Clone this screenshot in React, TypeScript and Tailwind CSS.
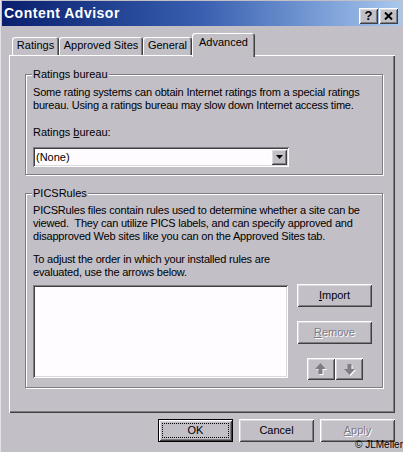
const raised =
    "shadow-[inset_1px_1px_0_#fff,inset_-1px_-1px_0_#404040,inset_2px_2px_0_#dcd8e0,inset_-2px_-2px_0_#807c84]";
const sunken =
    "shadow-[inset_1px_1px_0_#807c84,inset_-1px_-1px_0_#fff,inset_2px_2px_0_#404040,inset_-2px_-2px_0_#dcd8e0]";
const etched = "border border-[#807c84] shadow-[inset_1px_1px_0_#fff,1px_1px_0_#fff]";
const disabledText = "text-[#807c84] [text-shadow:1px_1px_0_#fff]";

function Button({
    children,
    disabled,
    className = "",
}: {
    children: React.ReactNode;
    disabled?: boolean;
    className?: string;
}) {
    return (
        <div
            className={`w-[75px] h-[23px] flex items-center justify-center ${raised} ${
                disabled ? disabledText : "text-black"
            } ${className}`}
        >
            {children}
        </div>
    );
}

function Tab({ label, width, active }: { label: string; width: string; active?: boolean }) {
    return (
        <div
            className={`${width} flex justify-center rounded-t-[3px] bg-[#c3bfc7] shadow-[inset_1px_1px_0_#fff,inset_-1px_0_0_#404040,inset_-2px_0_0_#807c84] ${
                active ? "h-[24px] -mb-[2px] pt-[3px] relative z-10" : "h-[18px] pt-[2px]"
            }`}
        >
            {label}
        </div>
    );
}

function ArrowIcon({ down }: { down?: boolean }) {
    const pts = "6.5,1 12,7 8.5,7 8.5,12 4.5,12 4.5,7 1,7";
    return (
        <svg width="14" height="14" viewBox="0 0 14 14" className={down ? "rotate-180" : ""}>
            <polygon points={pts} transform={down ? "translate(-1,-1)" : "translate(1,1)"} fill="#fff" />
            <polygon points={pts} fill="#807c84" />
        </svg>
    );
}

export default function App() {
    return (
        <div className="relative w-[403px] h-[452px] overflow-hidden bg-[#c3bfc7] text-[11px] leading-[13px] text-black font-['Liberation_Sans',Arial,sans-serif] shadow-[inset_1px_0_0_#e4e0e8]">
            {/* title bar */}
            <div className="mx-[2px] mt-[1px] h-[25px] flex items-center justify-between pl-[2px] pr-[3px] bg-gradient-to-r from-[#0a1f6e] via-[#3a5fb0] to-[#a8c8ee]">
                <span className="text-white font-bold text-[14px] tracking-[0.5px]">
                    Content Advisor
                </span>
                <div className="flex gap-[1px] mt-[4px]">
                    <div
                        className={`w-[19px] h-[16px] flex items-center justify-center bg-[#c3bfc7] font-bold text-[13px] leading-[13px] ${raised}`}
                    >
                        ?
                    </div>
                    <div
                        className={`w-[19px] h-[16px] flex items-center justify-center bg-[#c3bfc7] ${raised}`}
                    >
                        <svg width="9" height="8" viewBox="0 0 9 8">
                            <path d="M1 0.5 L8 7.5 M8 0.5 L1 7.5" stroke="#000" strokeWidth="2" />
                        </svg>
                    </div>
                </div>
            </div>

            {/* tabs */}
            <div className="ml-[9px] mt-[7px] w-[386px]">
                <div className="h-[22px] flex items-end pl-[3px]">
                    <Tab label="Ratings" width="w-[47px]" />
                    <Tab label="Approved Sites" width="w-[84px]" />
                    <Tab label="General" width="w-[49px]" />
                    <Tab label="Advanced" width="w-[63px]" active />
                </div>

                <div className="h-[358px] pt-[19px] pl-[16px] shadow-[inset_1px_1px_0_#fff,inset_-1px_-1px_0_#404040,inset_-2px_-2px_0_#807c84]">
                    {/* Ratings bureau group */}
                    <div className={`relative w-[358px] h-[101px] pt-[11px] pl-[7px] ${etched}`}>
                        <span className="absolute -top-[7px] left-[6px] px-[1px] bg-[#c3bfc7]">
                            Ratings bureau
                        </span>
                        <p className="whitespace-nowrap tracking-[-0.2px]">
                            Some rating systems can obtain Internet ratings from a special ratings
                            <br />
                            bureau. Using a ratings bureau may slow down Internet access time.
                        </p>
                        <p className="mt-[14px]">
                            Ratings <u>b</u>ureau:
                        </p>
                        <div
                            className={`mt-[8px] w-[256px] h-[20px] bg-[#fffcff] flex items-center justify-between pl-[3px] pr-[2px] ${sunken}`}
                        >
                            <span>(None)</span>
                            <div
                                className={`w-[16px] h-[16px] bg-[#c3bfc7] flex items-center justify-center ${raised}`}
                            >
                                <svg width="7" height="4" viewBox="0 0 7 4">
                                    <polygon points="0,0 7,0 3.5,4" fill="#000" />
                                </svg>
                            </div>
                        </div>
                    </div>

                    {/* PICSRules group */}
                    <div className={`relative mt-[18px] w-[358px] h-[195px] pt-[10px] pl-[7px] ${etched}`}>
                        <span className="absolute -top-[7px] left-[6px] px-[1px] bg-[#c3bfc7]">
                            PICSRules
                        </span>
                        <p className="whitespace-pre tracking-[-0.2px]">
                            {"PICSRules files contain rules used to determine whether a site can be\nviewed.  They can utilize PICS labels, and can specify approved and\ndisapproved Web sites like you can on the Approved Sites tab."}
                        </p>
                        <p className="mt-[10px] whitespace-pre tracking-[-0.2px]">
                            {"To adjust the order in which your installed rules are\nevaluated, use the arrows below."}
                        </p>
                        <div className="mt-[6px] flex gap-[9px]">
                            <div className={`w-[255px] h-[93px] bg-[#fffcff] ${sunken}`} />
                            <div className="-mt-[1px] flex flex-col">
                                <Button>
                                    <span>
                                        <u>I</u>mport
                                    </span>
                                </Button>
                                <Button disabled className="mt-[14px]">
                                    <span>
                                        <u>R</u>emove
                                    </span>
                                </Button>
                                <div className="mt-[14px] flex justify-center pl-[1px]">
                                    <div
                                        className={`w-[28px] h-[22px] flex items-center justify-center ${raised}`}
                                    >
                                        <ArrowIcon />
                                    </div>
                                    <div
                                        className={`w-[28px] h-[22px] flex items-center justify-center ${raised}`}
                                    >
                                        <ArrowIcon down />
                                    </div>
                                </div>
                            </div>
                        </div>
                    </div>
                </div>
            </div>

            {/* dialog buttons */}
            <div className="mt-[6px] flex justify-end gap-[6px] pr-[8px]">
                <div className="w-[75px] h-[23px] border border-black">
                    <div className={`h-full p-[3px] ${raised}`}>
                        <div className="h-full flex items-center justify-center border border-dotted border-black">
                            OK
                        </div>
                    </div>
                </div>
                <Button>Cancel</Button>
                <Button disabled>
                    <span>
                        <u>A</u>pply
                    </span>
                </Button>
            </div>

            {/* watermark */}
            <span className="absolute right-[0px] bottom-[2px] text-[10px] leading-[11px] text-black">
                © JLMeller
            </span>
        </div>
    );
}
